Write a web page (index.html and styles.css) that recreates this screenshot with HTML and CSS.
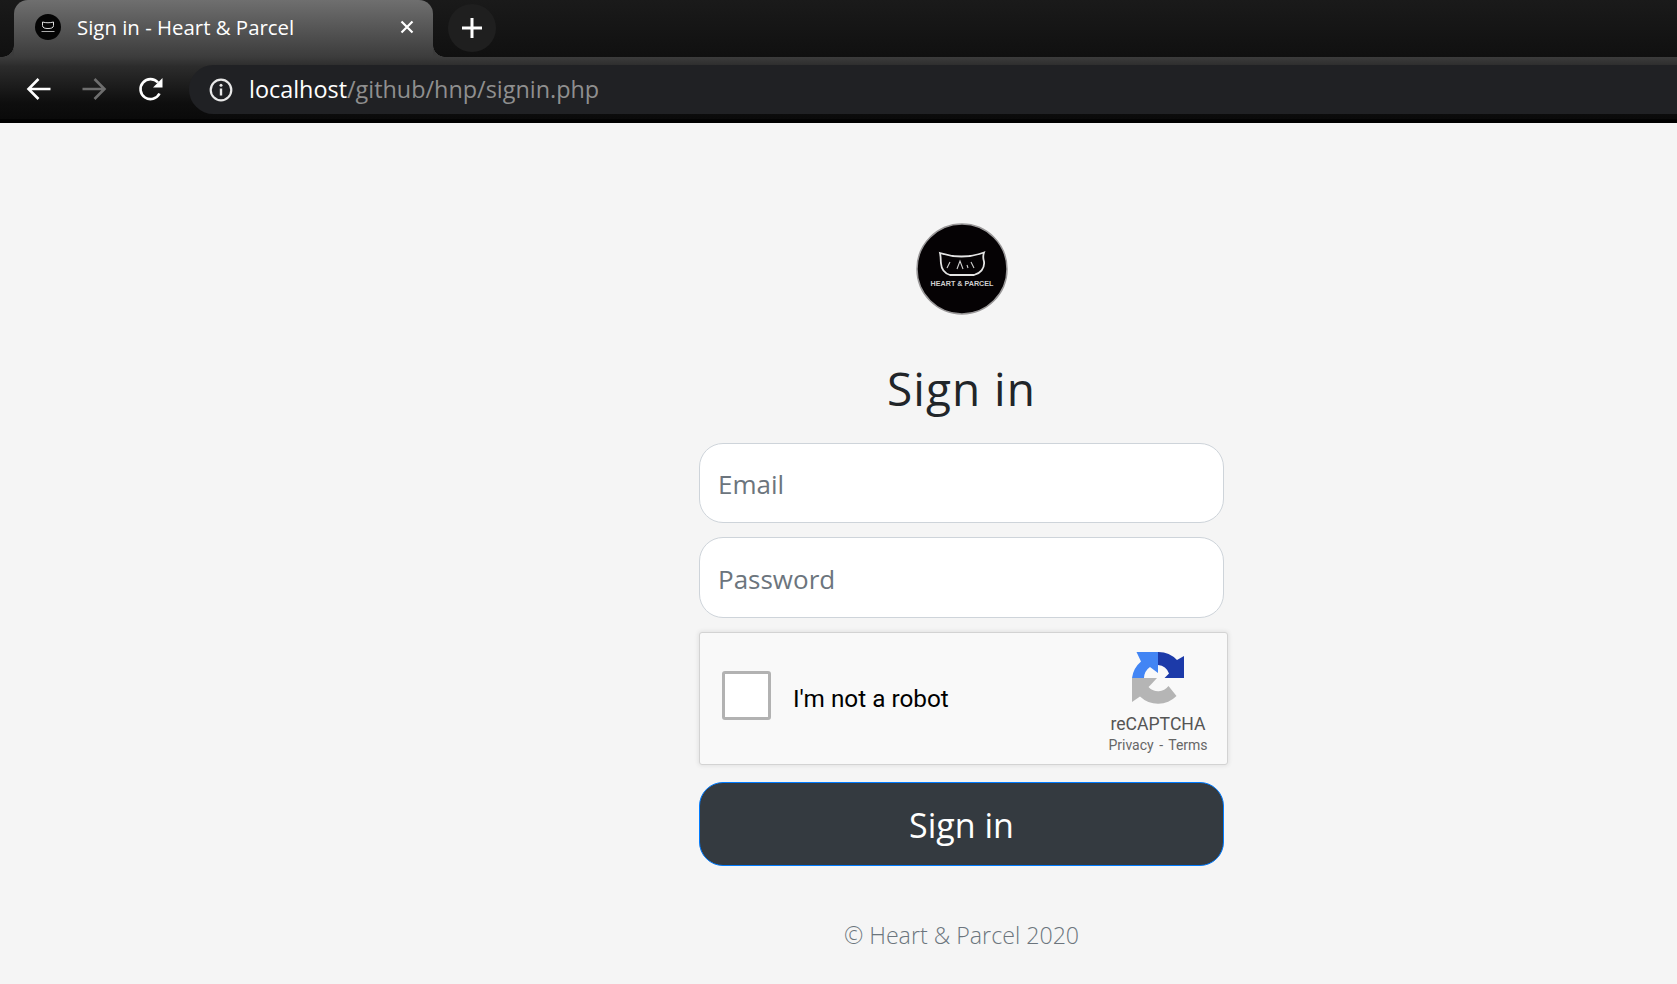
FILE: index.html
```html
<!DOCTYPE html>
<html lang="en">
<head>
    <meta charset="UTF-8">
    <title>Sign in - Heart &amp; Parcel</title>
    <link rel="stylesheet" href="styles.css">
</head>
<body>

    <div class="browser">
        <div class="tabstrip">
            <div class="tab">
                <svg class="favicon" viewBox="0 0 26 26">
                    <circle cx="13" cy="13" r="13" fill="#050505"/>
                    <path d="M7.500 8c3.500 1 7.500 1 11 0v3.500c0 2.500-2.500 3-5.500 3s-5.500-.5-5.500-3z" fill="none" stroke="#ddd" stroke-width="1"/>
                    <path d="M6.500 17.500h13" stroke="#aaa" stroke-width="1"/>
                </svg>
                <span class="tab-title">Sign in - Heart &amp; Parcel</span>
                <svg class="tab-close" viewBox="0 0 14 14">
                    <path d="M1.500 1.500l11 11M12.500 1.500l-11 11" stroke="#fff" stroke-width="2.200"/>
                </svg>
            </div>
            <div class="newtab">
                <svg viewBox="0 0 22 22" width="22" height="22">
                    <path d="M11 1v20M1 11h20" stroke="#fff" stroke-width="3"/>
                </svg>
            </div>
        </div>
        <div class="toolbar">
            <svg class="nav-icon nav-back" viewBox="0 0 26 26">
                <path d="M24.500 13H3M12.500 3L2.500 13l10 10" fill="none" stroke="#fff" stroke-width="2.600"/>
            </svg>
            <svg class="nav-icon nav-forward" viewBox="0 0 26 26">
                <path d="M1.500 13H23M13.500 3l10 10-10 10" fill="none" stroke="#6e6e6e" stroke-width="2.600"/>
            </svg>
            <svg class="nav-icon nav-reload" viewBox="0 0 26 26">
                <path d="M21.500 17.500A10 10 0 1 1 20 6.500" fill="none" stroke="#fff" stroke-width="2.600"/>
                <path d="M24.500 2v9.500H15z" fill="#fff"/>
            </svg>
            <div class="omnibox">
                <svg class="info-icon" viewBox="0 0 24 24">
                    <circle cx="12" cy="12" r="10.300" fill="none" stroke="#e8e8e8" stroke-width="2.200"/>
                    <path d="M12 10.500v7" stroke="#e8e8e8" stroke-width="2.400"/>
                    <circle cx="12" cy="7.200" r="1.500" fill="#e8e8e8"/>
                </svg>
                <span class="url"><span class="url-host">localhost</span>/github/hnp/signin.php</span>
            </div>
        </div>
    </div>

    <div class="container">
        <form class="signin-form">
            <svg class="logo" viewBox="0 0 92 92">
                <circle cx="46" cy="46" r="45" fill="#050204" stroke="#9a9899" stroke-width="1.500"/>
                <path d="M24 30c14 4.500 30 4.500 44-.5-1 3-1 6 0 9 1 7-4 12-10 13.500H34c-5-1.500-8.500-5-9-11.500-.5-3.500 0-6-1-10.500z" fill="none" stroke="#e4e4e4" stroke-width="1.800"/>
                <path d="M31 45l3-6M41 46l3-8 3 8M58 45l-3-6M51 42l1 3" fill="none" stroke="#cfcfcf" stroke-width="1.100"/>
                <text class="logo-text" x="46" y="63" text-anchor="middle">HEART &amp; PARCEL</text>
            </svg>
            <h1 class="title">Sign in</h1>
            <input class="field" type="email" placeholder="Email">
            <input class="field field-password" type="password" placeholder="Password">
            <div class="recaptcha">
                <span class="recaptcha-box"></span>
                <span class="recaptcha-label">I'm not a robot</span>
                <div class="recaptcha-brand">
                    <svg class="recaptcha-logo" viewBox="0 0 52 52">
                        <path d="M26 0A26 26 0 0 1 45 8L52 4V26H32.500L37 21.500A13 13 0 0 0 26 13z" fill="#1c3aa9"/>
                        <path d="M26 0H4.500L9 9.500A26 26 0 0 0 0 26H12A14 14 0 0 1 18 15L26 21z" fill="#4285f4"/>
                        <path d="M0 26H25L19 32.500 16.500 35A13 13 0 0 0 36.500 34L44.500 44A26 26 0 0 1 8 44.500L0 50z" fill="#b5b5b5"/>
                    </svg>
                    <span class="recaptcha-name">reCAPTCHA</span>
                    <span class="recaptcha-links">Privacy <span class="recaptcha-sep">-</span> Terms</span>
                </div>
            </div>
            <button type="button" class="signin-btn">Sign in</button>
            <p class="copyright">© Heart &amp; Parcel 2020</p>
        </form>
    </div>

</body>
</html>
```

FILE: styles.css
```css
* {
    box-sizing: border-box;
}

body {
    margin: 0;
    height: 984px;
    overflow: hidden;
    background-color: #f5f5f5;
    font-family: 'Open Sans', sans-serif;
}

/* browser chrome */
.browser {
    height: 123px;
    background-color: #000;
    overflow: hidden;
}

.tabstrip {
    height: 57px;
    display: flex;
    align-items: flex-start;
    padding-left: 14px;
    background: linear-gradient(#1a1a1a, #101010);
}

.tab {
    position: relative;
    width: 419px;
    height: 57px;
    display: flex;
    align-items: center;
    padding: 0 19px 3px 21px;
    border-radius: 14px 14px 0 0;
    background: linear-gradient(#6f6f6f, #3c3c3c);
}

.tab::before,
.tab::after {
    content: "";
    position: absolute;
    bottom: 0;
    width: 12px;
    height: 12px;
}

.tab::before {
    left: -12px;
    background: radial-gradient(circle at 0 0, transparent 11.500px, #3c3c3c 12px);
}

.tab::after {
    right: -12px;
    background: radial-gradient(circle at 100% 0, transparent 11.500px, #3c3c3c 12px);
}

.favicon {
    width: 26px;
    height: 26px;
}

.tab-title {
    flex: 1;
    margin-left: 16px;
    color: #fff;
    font-size: 20.400px;
}

.tab-close {
    width: 14px;
    height: 14px;
}

.newtab {
    width: 48px;
    height: 48px;
    margin: 4px 0 0 15px;
    display: flex;
    align-items: center;
    justify-content: center;
    border-radius: 50%;
    background-color: #1f1f1f;
}

.toolbar {
    position: relative;
    height: 66px;
    display: flex;
    align-items: flex-start;
    background: linear-gradient(#3c3c3c, #2c2c2c 14%, #0e0e0e 70%, #0a0a0a 94%, #000 95%);
}

.nav-icon {
    width: 26px;
    height: 26px;
    margin-top: 19px;
}

.nav-back {
    margin-left: 26px;
}

.nav-forward {
    margin-left: 29px;
}

.nav-reload {
    margin-left: 31px;
}

.omnibox {
    flex: 1;
    height: 49px;
    margin: 8px 0 0 25px;
    display: flex;
    align-items: center;
    padding: 0 0 2px 20px;
    border-radius: 25px 0 0 25px;
    background-color: #202124;
}

.info-icon {
    width: 24px;
    height: 24px;
    margin-top: 2px;
}

.url {
    margin-left: 16px;
    color: #8f8f8f;
    font-size: 23.400px;
}

.url-host {
    color: #fff;
}

/* sign in form, sits right of the window centre in the reference */
.container {
    display: flex;
    justify-content: center;
    padding-left: 246px;
}

.signin-form {
    width: 525px;
    padding-top: 100px;
    display: flex;
    flex-direction: column;
    align-items: stretch;
    text-align: center;
}

.logo {
    width: 92px;
    height: 92px;
    align-self: center;
}

.logo-text {
    font-family: 'Liberation Sans', sans-serif;
    font-size: 7.200px;
    font-weight: 700;
    fill: #cfcfcf;
}

.title {
    margin: 44px 0 26px;
    color: #212529;
    font-size: 46px;
    font-weight: 400;
    letter-spacing: 1px;
    line-height: 58px;
}

.field {
    width: 100%;
    height: 80px;
    padding: 2px 18px 0;
    border: 1px solid #ced4da;
    border-radius: 24px;
    background-color: #fff;
    font-family: 'Open Sans', sans-serif;
    font-size: 26px;
    color: #495057;
}

.field::placeholder {
    color: #6c757d;
    opacity: 1;
}

.field-password {
    height: 81px;
    margin-top: 14px;
}

.recaptcha {
    width: 529px;
    height: 133px;
    margin-top: 14px;
    display: flex;
    align-items: center;
    padding-left: 22px;
    border: 1px solid #d3d3d3;
    border-radius: 3px;
    background-color: #f9f9f9;
    box-shadow: 0 0 4px 1px rgba(0, 0, 0, 0.08);
    text-align: left;
}

.recaptcha-box {
    width: 49px;
    height: 49px;
    margin-bottom: 6px;
    border: 3px solid #b2b2b2;
    border-radius: 3px;
    background-color: #fff;
}

.recaptcha-label {
    flex: 1;
    margin-left: 22px;
    color: #000;
    font-family: Roboto, sans-serif;
    font-size: 24.300px;
}

.recaptcha-brand {
    width: 104px;
    margin-right: 17px;
    padding-top: 10px;
    display: flex;
    flex-direction: column;
    align-items: center;
    font-family: Roboto, sans-serif;
    color: #555;
}

.recaptcha-logo {
    width: 52px;
    height: 52px;
}

.recaptcha-name {
    margin-top: 9px;
    font-size: 17.600px;
    line-height: 22px;
}

.recaptcha-links {
    color: #666;
    font-size: 14px;
    line-height: 20px;
    white-space: nowrap;
}

.recaptcha-sep {
    margin: 0 2px;
}

.signin-btn {
    width: 100%;
    height: 84px;
    margin-top: 17px;
    padding-top: 2px;
    border: 1px solid #007bff;
    border-radius: 24px;
    background-color: #343a40;
    color: #fff;
    font-family: 'Open Sans', sans-serif;
    font-size: 34px;
    cursor: pointer;
}

.copyright {
    margin: 53px 0 0;
    color: #6c757d;
    font-size: 23.200px;
    font-weight: 300;
}
```
